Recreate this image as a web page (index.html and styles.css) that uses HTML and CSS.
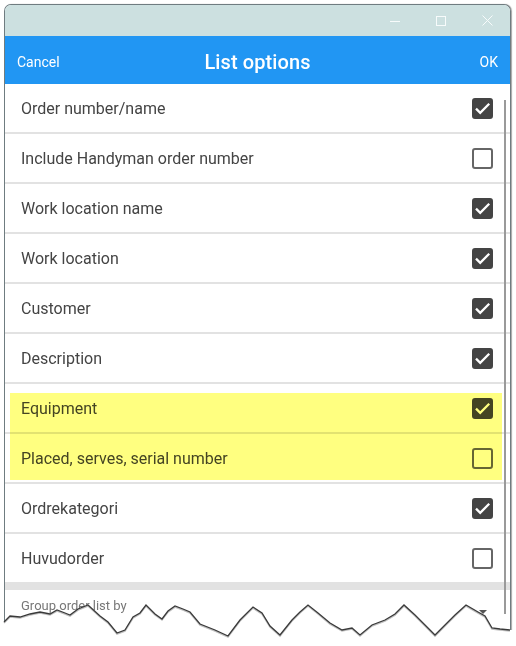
FILE: index.html
```html
<!DOCTYPE html>
<html>
<head>
  <meta charset="UTF-8">
  <title>List options</title>
  <link rel="stylesheet" href="styles.css">
</head>
<body>
  <div class="window">
    <div class="titlebar">
      <span class="win-btn">
        <svg width="10" height="10" viewBox="0 0 10 10"><path d="M0 5.5h10" stroke="#f7fbfb" stroke-width="1"/></svg>
      </span>
      <span class="win-btn">
        <svg width="10" height="10" viewBox="0 0 10 10"><rect x="0.5" y="0.5" width="9" height="9" fill="none" stroke="#f7fbfb" stroke-width="1"/></svg>
      </span>
      <span class="win-btn">
        <svg width="11" height="11" viewBox="0 0 11 11"><path d="M0.5 0.5l10 10M10.5 0.5l-10 10" stroke="#f7fbfb" stroke-width="1"/></svg>
      </span>
    </div>

    <header class="appbar">
      <span class="appbar-action">Cancel</span>
      <h1 class="appbar-title">List options</h1>
      <span class="appbar-action">OK</span>
    </header>

    <div class="options">
      <ul class="option-list">
        <li class="option"><span>Order number/name</span><span class="check on"></span></li>
        <li class="option"><span>Include Handyman order number</span><span class="check"></span></li>
        <li class="option"><span>Work location name</span><span class="check on"></span></li>
        <li class="option"><span>Work location</span><span class="check on"></span></li>
        <li class="option"><span>Customer</span><span class="check on"></span></li>
        <li class="option"><span>Description</span><span class="check on"></span></li>
        <li class="option"><span>Equipment</span><span class="check on"></span></li>
        <li class="option"><span>Placed, serves, serial number</span><span class="check"></span></li>
        <li class="option"><span>Ordrekategori</span><span class="check on"></span></li>
        <li class="option"><span>Huvudorder</span><span class="check"></span></li>
      </ul>
      <div class="section-gap"></div>
      <div class="group-row">
        <span class="group-label">Group order list by</span>
        <span class="caret"></span>
      </div>
      <div class="scroll-thumb"></div>
    </div>
  </div>

  <div class="highlight"></div>

  <svg class="tear" width="516" height="56" viewBox="0 590 516 56">
    <path class="tear-paper" d="M0 622 L4 622 L10 616 L20 617 L30 614 L40 612 L50 614 L57 610 L65 613 L70 615 L78 609 L88 605 L100 616 L108 622 L117 633 L125 630 L133 617 L140 613 L146 605 L155 614 L162 619 L168 611 L175 606 L183 609 L190 612 L200 624 L215 630 L228 636 L240 620 L253 607 L262 613 L270 626 L280 635 L292 620 L300 612 L308 605 L318 613 L330 623 L342 630 L352 628 L360 635 L372 625 L385 620 L395 614 L404 605 L415 615 L425 625 L435 635 L445 625 L455 615 L466 605 L478 612 L485 616 L492 628 L500 629 L510 630 L516 630 L516 646 L0 646 Z"/>
    <path class="tear-shade" d="M4 623 L10 617 L20 618 L30 615 L40 613 L50 615 L57 611 L65 614 L70 616 L78 610 L88 606 L100 617 L108 623 L117 634 L125 631 L133 618 L140 614 L146 606 L155 615 L162 620 L168 612 L175 607 L183 610 L190 613 L200 625 L215 631 L228 637 L240 621 L253 608 L262 614 L270 627 L280 636 L292 621 L300 613 L308 606 L318 614 L330 624 L342 631 L352 629 L360 636 L372 626 L385 621 L395 615 L404 606 L415 616 L425 626 L435 636 L445 626 L455 616 L466 606 L478 613 L485 617 L492 629 L500 630 L510 631"/>
    <path class="tear-edge" d="M4 622 L10 616 L20 617 L30 614 L40 612 L50 614 L57 610 L65 613 L70 615 L78 609 L88 605 L100 616 L108 622 L117 633 L125 630 L133 617 L140 613 L146 605 L155 614 L162 619 L168 611 L175 606 L183 609 L190 612 L200 624 L215 630 L228 636 L240 620 L253 607 L262 613 L270 626 L280 635 L292 620 L300 612 L308 605 L318 613 L330 623 L342 630 L352 628 L360 635 L372 625 L385 620 L395 614 L404 605 L415 615 L425 625 L435 635 L445 625 L455 615 L466 605 L478 612 L485 616 L492 628 L500 629 L510 630"/>
  </svg>
</body>
</html>
```

FILE: styles.css
```css
* {
  box-sizing: border-box;
}
html,
body {
  margin: 0;
  height: 646px;
  overflow: hidden;
  background: #fff;
  font-family: Roboto, "Noto Sans", sans-serif;
}

.window {
  width: 507px;
  height: 642px;
  margin: 4px 0 0 4px;
  border: 1px solid #6f7c80;
  border-bottom: 0;
  border-radius: 7px 7px 0 0;
  box-shadow: 1px 0 1px rgba(0, 0, 0, 0.35);
  background: #fff;
  overflow: hidden;
}

/* window chrome */
.titlebar {
  height: 31px;
  display: flex;
  justify-content: flex-end;
  background: #cce0e0;
}
.win-btn {
  width: 46px;
  display: flex;
  align-items: center;
  justify-content: center;
}

/* app bar */
.appbar {
  height: 48px;
  display: flex;
  align-items: center;
  justify-content: space-between;
  padding: 3px 12px 0 12px;
  background: #2196f3;
  color: #fff;
}
.appbar-action {
  font-size: 14px;
  width: 60px;
}
.appbar-action:last-child {
  text-align: right;
}
.appbar-title {
  margin: 0;
  font-size: 20px;
  font-weight: 500;
  letter-spacing: 0.1px;
}

/* options list */
.options {
  position: relative;
}
.option-list {
  list-style: none;
  margin: 0;
  padding: 0;
}
.option {
  height: 50px;
  display: flex;
  align-items: center;
  justify-content: space-between;
  padding: 0 17px 0 16px;
  border-bottom: 2px solid #e2e2e2;
  font-size: 16px;
  color: #444;
}
.option:last-child {
  border-bottom: 0;
  height: 48px;
}
.check {
  width: 21px;
  height: 21px;
  border: 2px solid #666;
  border-radius: 3px;
  background: #fff;
}
.check.on {
  border-color: #444;
  background: #444 url("data:image/svg+xml;utf8,<svg xmlns='http://www.w3.org/2000/svg' width='17' height='17' viewBox='0 0 17 17'><path d='M2 8.6l4.2 4.2L15.2 3.8' fill='none' stroke='white' stroke-width='2.3'/></svg>") center / 17px 17px no-repeat;
}

.section-gap {
  height: 8px;
  background: #e2e2e2;
}
.group-row {
  display: flex;
  align-items: center;
  justify-content: space-between;
  padding: 6px 23px 0 16px;
}
.group-label {
  font-size: 13px;
  color: #777;
}
.caret {
  margin-top: 14px;
  border-left: 4px solid transparent;
  border-right: 4px solid transparent;
  border-top: 4px solid #555;
}

.scroll-thumb {
  position: absolute;
  top: 16px;
  right: 4px;
  bottom: 0;
  width: 2px;
  background: #9a9a9a;
}

/* marker over two rows */
.highlight {
  position: absolute;
  left: 10px;
  top: 393px;
  width: 492px;
  height: 87px;
  background: #ffff80;
  mix-blend-mode: multiply;
}

/* torn bottom edge */
.tear {
  position: absolute;
  left: 0;
  top: 590px;
}
.tear-paper {
  fill: #fff;
}
.tear-shade {
  fill: none;
  stroke: rgba(0, 0, 0, 0.25);
  stroke-width: 1.6;
}
.tear-edge {
  fill: none;
  stroke: #3a3a3a;
  stroke-width: 1.3;
}
```
